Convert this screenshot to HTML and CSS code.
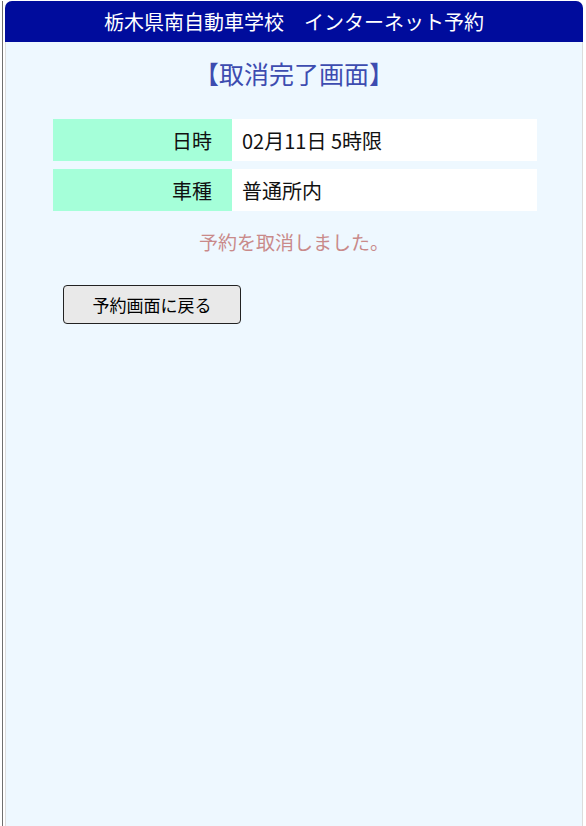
FILE: index.html
```html
<!DOCTYPE html>
<html lang="ja">
<head>
      <meta charset="UTF-8">
      <meta name="viewport" content="width=device-width, initial-scale=1.0">
      <title>取消完了画面</title>
      <link rel="stylesheet" href="styles.css">
</head>
<body>
      <div class="frame">
            <div class="page">
                  <header class="page-header">栃木県南自動車学校　インターネット予約</header>
                  <main class="page-body">
                        <h1 class="title">【取消完了画面】</h1>
                        <table class="info">
                              <tr>
                                    <th>日時</th>
                                    <td>02月11日 5時限</td>
                              </tr>
                              <tr>
                                    <th>車種</th>
                                    <td>普通所内</td>
                              </tr>
                        </table>
                        <p class="message">予約を取消しました。</p>
                        <div class="actions">
                              <button class="back-btn" type="button">予約画面に戻る</button>
                        </div>
                  </main>
            </div>
      </div>
</body>
</html>
```

FILE: styles.css
```css
:root {
	--navy: #000c9c;
	--pale: #eef8ff;
	--mint: #a5ffd9;
	--title: #3d4cb0;
	--notice: #c98a8a;
}
html {
	box-sizing: border-box;
}
*, *:before, *:after {
	box-sizing: inherit;
}
body {
	margin: 0;
	background: #fff;
	font-family: "Noto Sans CJK JP", "Noto Sans", sans-serif;
	color: #111;
}
.frame {
	margin-left: 2px;
	border-left: 1px solid #6f6f6f;
	padding-left: 2px;
	min-height: 826px;
}
.page {
	width: 578px;
	min-height: 826px;
	margin-top: 1px;
	border: 1px solid #dcdcdc;
	border-bottom: none;
	border-radius: 7px 7px 0 0;
	background: var(--pale);
}
.page-header {
	height: 41px;
	margin: -1px -1px 0;
	border-radius: 7px 7px 0 0;
	background: var(--navy);
	color: #fff;
	font-size: 20px;
	line-height: 41px;
	text-align: center;
}
.page-body {
	padding: 11px 0 0;
}
.title {
	margin: 0;
	font-size: 25px;
	font-weight: normal;
	line-height: 40px;
	color: var(--title);
	text-align: center;
}
.info {
	width: 484px;
	margin: 18px 0 0 47px;
	border-collapse: separate;
	border-spacing: 0 8px;
	font-size: 20px;
}
.info th,
.info td {
	height: 42px;
	padding: 0;
	font-weight: normal;
}
.info th {
	width: 179px;
	padding-right: 20px;
	background: var(--mint);
	text-align: right;
}
.info td {
	padding-left: 10px;
	background: #fff;
	text-align: left;
}
.message {
	margin: 8px 0 0;
	font-size: 19px;
	line-height: 30px;
	color: var(--notice);
	text-align: center;
}
.actions {
	padding: 28px 0 0 57px;
}
.back-btn {
	width: 178px;
	height: 39px;
	padding: 0;
	border: 1px solid #222;
	border-radius: 4px;
	background: #e9e9e9;
	font-family: inherit;
	font-size: 17px;
	color: #000;
}
```
